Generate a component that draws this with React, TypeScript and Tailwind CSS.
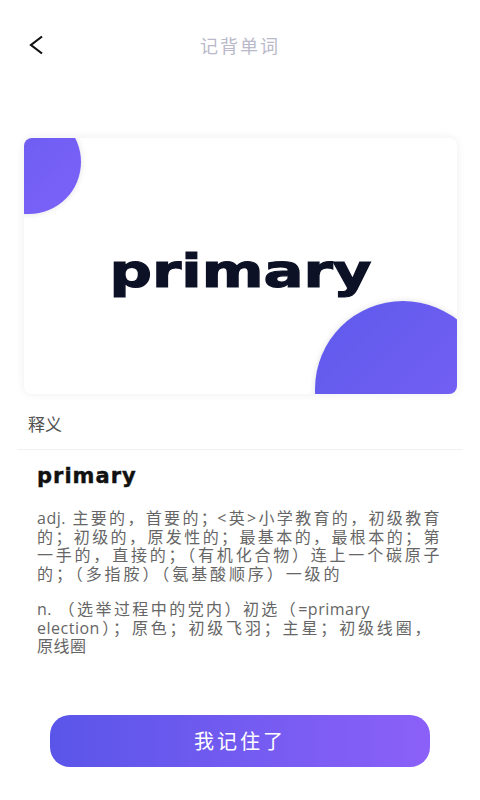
import React from 'react';

const cjk = '[font-family:"Noto_Sans_CJK_SC",sans-serif]';

const BackIcon = () => (
  <svg width="15" height="20" viewBox="0 0 15 20" fill="none">
    <path d="M13 1.5L2 10l11 8.5" stroke="#111" strokeWidth="2.2" />
  </svg>
);

// each line of the definition is laid out on its own, stretched to the width it has in the picture
const defLines = [
  { text: 'adj. 主要的，首要的；<英>小学教育的，初级教育', w: 'w-[403px]' },
  { text: '的；初级的，原发性的；最基本的，最根本的；第', w: 'w-[403px]' },
  { text: '一手的，直接的；（有机化合物）连上一个碳原子', w: 'w-[403px]' },
  { text: '的；（多指胺）（氨基酸顺序）一级的', w: 'w-[303px]' },
];

const nounLines = [
  { text: 'n. （选举过程中的党内）初选（=primary', w: 'w-[333px]' },
  { text: 'election）；原色；初级飞羽；主星；初级线圈，', w: 'w-[394px]' },
  { text: '原线圈', w: '' },
];

const App: React.FC = () => {
  return (
    <div className="w-[480px] min-h-[800px] bg-white">
      <div className="grid grid-cols-[1fr_auto_1fr] items-center h-[90px]">
        <div className="pl-[29px] flex items-center">
          <BackIcon />
        </div>
        <div className={`text-[18px] tracking-[2px] text-[#b9b9c9] ${cjk}`}>记背单词</div>
        <div></div>
      </div>

      <div className="relative mt-[48px] ml-[24px] w-[433px] h-[256px] rounded-[8px] bg-white overflow-hidden shadow-[0_0_10px_rgba(0,0,0,0.07)] flex items-center justify-center pt-[10px]">
        <div className="absolute left-[-57px] top-[-28px] w-[114px] h-[104px] rounded-full bg-linear-to-br from-[#675bf0] to-[#7c62f8] shadow-[0_0_6px_rgba(0,0,0,0.12)]"></div>
        <div className="absolute left-[291px] top-[163px] w-[176px] h-[176px] rounded-full bg-linear-to-br from-[#5d5aeb] to-[#7d61f8] shadow-[0_0_6px_rgba(0,0,0,0.12)]"></div>
        <div className='relative text-[46px] leading-none font-bold text-[#0d1126] scale-x-[1.29] [font-family:"DejaVu_Sans",sans-serif] [-webkit-text-stroke:1.2px_#0d1126]'>
          primary
        </div>
      </div>

      <div className={`mt-[20px] pl-[28px] h-[20px] leading-[20px] text-[17px] text-[#505050] ${cjk}`}>释义</div>
      <div className="mt-[15px] mx-[17px] h-px bg-[#f0f0f0]"></div>

      <div className='mt-[14px] pl-[37px] text-[21px] leading-[24px] font-bold tracking-[1px] text-[#111] [font-family:"DejaVu_Sans",sans-serif] [-webkit-text-stroke:0.4px_#111]'>
        primary
      </div>

      <div className='pl-[37px] text-[16px] leading-[18.5px] tracking-[0.5px] text-[#666] [font-family:"Open_Sans","Noto_Sans_CJK_SC",sans-serif]'>
        <div className="mt-[21px]">
          {defLines.map((l, i) => (
            <div key={i} className={`${l.w} text-justify [text-align-last:justify]`}>{l.text}</div>
          ))}
        </div>
        <div className="mt-[17px]">
          {nounLines.map((l, i) => (
            <div key={i} className={`${l.w} ${l.w ? 'text-justify [text-align-last:justify]' : ''}`}>{l.text}</div>
          ))}
        </div>
      </div>

      <button className={`mt-[59px] ml-[50px] w-[380px] h-[52px] rounded-[20px] bg-linear-to-r from-[#5a55e9] to-[#8b60f8] text-white text-[20px] tracking-[3px] flex items-center justify-center ${cjk}`}>
        我记住了
      </button>
    </div>
  );
};

export default App;
